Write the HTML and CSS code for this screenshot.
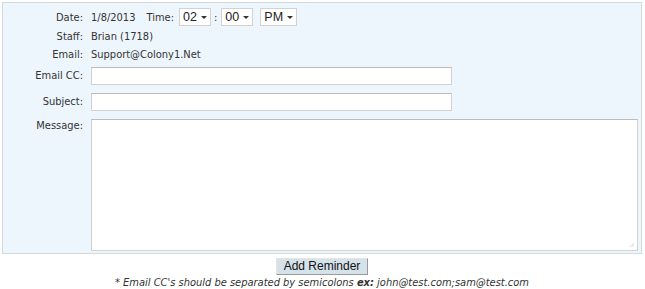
FILE: index.html
```html
<!DOCTYPE html>
<html lang="en">
<head>
    <meta charset="UTF-8">
    <title>Add Reminder</title>
    <link rel="stylesheet" href="styles.css">
</head>
<body>
    <form class="reminder">
        <div class="panel">
            <!-- Date / time -->
            <label class="lbl row-date">Date:</label>
            <div class="val row-date">
                <span>1/8/2013</span>
                <span class="time-lbl">Time:</span>
                <span class="pick w-hour"><select><option>02</option></select></span>
                <span class="colon">:</span>
                <span class="pick w-min"><select><option>00</option></select></span>
                <span class="pick w-ampm"><select><option>PM</option></select></span>
            </div>

            <label class="lbl row-text">Staff:</label>
            <div class="val row-text">Brian (1718)</div>

            <label class="lbl row-text">Email:</label>
            <div class="val row-text">Support@Colony1.Net</div>

            <label class="lbl row-cc" for="cc">Email CC:</label>
            <div class="val row-cc"><input type="text" id="cc" class="field"></div>

            <label class="lbl row-subject" for="subject">Subject:</label>
            <div class="val row-subject"><input type="text" id="subject" class="field"></div>

            <label class="lbl row-msg" for="message">Message:</label>
            <div class="val row-msg">
                <div class="message-wrap">
                    <textarea id="message" class="message"></textarea>
                    <span class="grip"></span>
                </div>
            </div>
        </div>

        <div class="actions">
            <button type="button" class="button">Add Reminder</button>
        </div>
        <p class="note">* Email CC's should be separated by semicolons <b>ex:</b> john@test.com;sam@test.com</p>
    </form>
</body>
</html>
```

FILE: styles.css
```css
body {
    margin: 0;
    padding: 2px 3px 0 2px;
    font-family: "DejaVu Sans Condensed", "DejaVu Sans", sans-serif;
    font-size: 11px;
    color: #333;
    background-color: #fff;
}

.panel {
    display: grid;
    grid-template-columns: 80px 1fr;
    column-gap: 8px;
    padding: 3px 4px 2px 0;
    background-color: #eef6fd;
    border: 1px solid #d6d9dc;
}

.lbl {
    text-align: right;
}

.row-date {
    height: 22px;
    display: flex;
    align-items: center;
}

.lbl.row-date {
    justify-content: flex-end;
}

.row-text {
    height: 18px;
    line-height: 18px;
}

.row-cc {
    margin-top: 3px;
    height: 18px;
    line-height: 18px;
}

.row-subject {
    margin-top: 8px;
    height: 18px;
    line-height: 18px;
}

.row-msg {
    margin-top: 8px;
}

.time-lbl {
    margin-left: 11px;
    margin-right: 5px;
}

.colon {
    margin: 0 4px 0 3px;
}

.pick {
    position: relative;
    display: inline-block;
    height: 18px;
}

.pick select {
    -webkit-appearance: none;
    appearance: none;
    width: 100%;
    height: 18px;
    margin: 0;
    padding: 0 0 0 3px;
    border: 1px solid #d2d2d2;
    border-radius: 0;
    background-color: #fff;
    font-family: "Liberation Sans", Arial, sans-serif;
    font-size: 12.5px;
    color: #222;
}

.pick::after {
    content: "";
    position: absolute;
    right: 4px;
    top: 8px;
    border-left: 3px solid transparent;
    border-right: 3px solid transparent;
    border-top: 3px solid #333;
    pointer-events: none;
}

.w-hour { width: 32px; }
.w-min { width: 32px; }
.w-ampm { width: 37px; margin-left: 7px; }

.field {
    display: block;
    width: 361px;
    height: 18px;
    margin: 0;
    padding: 0 3px;
    box-sizing: border-box;
    border: 1px solid #d2d2d2;
    border-top-color: #bcbcbc;
    background-color: #fff;
    font-family: inherit;
    font-size: 11px;
}

.message-wrap {
    position: relative;
    width: 547px;
}

.message {
    display: block;
    width: 547px;
    height: 132px;
    margin: 0;
    padding: 2px 3px;
    box-sizing: border-box;
    border: 1px solid #d2d2d2;
    border-top-color: #bcbcbc;
    background-color: #fff;
    font-family: inherit;
    font-size: 11px;
    resize: none;
}

/* dotted resize grip */
.grip {
    position: absolute;
    right: 4px;
    bottom: 4px;
    width: 5px;
    height: 5px;
    background-image: radial-gradient(circle, #c4c4c4 0.5px, transparent 0.8px);
    background-size: 2px 2px;
    clip-path: polygon(100% 0, 100% 100%, 0 100%);
}

.actions {
    text-align: center;
    margin-top: 4px;
    height: 17px;
}

.button {
    width: 92px;
    height: 17px;
    margin: 0;
    padding: 0;
    border: 1px solid #9a9a9a;
    border-top-color: #e4e4e4;
    border-left-color: #e4e4e4;
    border-radius: 0;
    background-color: #d6e2ea;
    font-family: "Liberation Sans", Arial, sans-serif;
    font-size: 12px;
    line-height: 15px;
    color: #111;
}

.note {
    margin: 1px 0 0 0;
    text-align: center;
    font-style: italic;
    line-height: 13px;
}
```
